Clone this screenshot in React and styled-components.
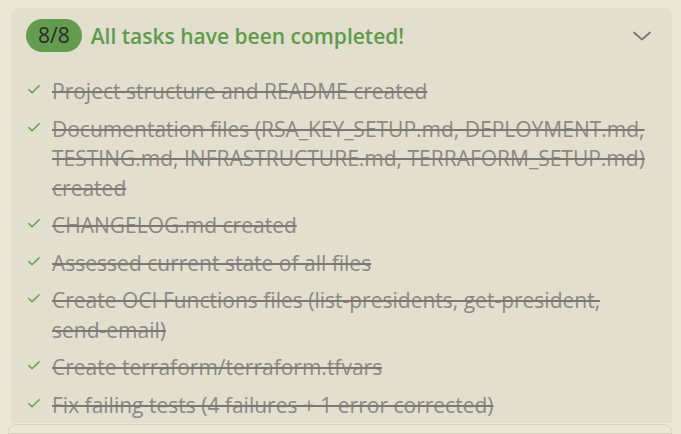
import React from "react";
import styled, { createGlobalStyle } from "styled-components";

const Global = createGlobalStyle`
  html, body { margin: 0; padding: 0; background: #ece7d6; }
  body { font-family: "Open Sans", "Noto Sans", sans-serif; overflow: hidden; }
  * { box-sizing: border-box; }
`;

const Page = styled.div`
  width: 681px;
  height: 434px;
  overflow: hidden;
  padding: 8px 9px 0 8px;
  display: flex;
  flex-direction: column;
  gap: 1px;
`;

const Card = styled.section`
  flex: none;
  margin-left: 3px;
  background: #e2dfcf;
  border-radius: 8px 8px 0 0;
  padding: 11px 20px 3px 15px;
  display: flex;
  flex-direction: column;
`;

const Header = styled.div`
  display: flex;
  align-items: center;
  height: 33px;
  gap: 9px;
`;

const Badge = styled.span`
  display: inline-flex;
  align-items: center;
  justify-content: center;
  height: 33px;
  padding: 0 12px;
  border-radius: 17px;
  background: #649c4f;
  color: #2b2b28;
  font-size: 21px;
  line-height: 1;
`;

const Title = styled.h2`
  margin: 0;
  flex: 1;
  font-size: 21px;
  font-weight: 600;
  color: #5f9b4b;
`;

const Chevron = styled.svg`
  width: 20px;
  height: 20px;
  color: #7a7873;
`;

const List = styled.ul`
  list-style: none;
  margin: 25px 0 0 0;
  padding: 0 0 0 2px;
  display: flex;
  flex-direction: column;
  gap: 8px;
`;

const Item = styled.li`
  display: flex;
  align-items: flex-start;
  gap: 12px;
`;

const Check = styled.svg`
  flex: none;
  width: 12px;
  height: 9px;
  margin-top: 8px;
  color: #5ba04a;
`;

const Text = styled.span`
  font-size: 21px;
  line-height: 29.5px;
  color: #8a8983;
  text-decoration: line-through;
  text-decoration-color: #7a7974;
  text-decoration-thickness: 2px;
`;

const Footer = styled.div`
  flex: 1;
  background: #ebe7d6;
  border: 1px solid #d6d2c2;
  border-radius: 8px 8px 0 0;
`;

const tasks = [
  "Project structure and README created",
  "Documentation files (RSA_KEY_SETUP.md, DEPLOYMENT.md, TESTING.md, INFRASTRUCTURE.md, TERRAFORM_SETUP.md) created",
  "CHANGELOG.md created",
  "Assessed current state of all files",
  "Create OCI Functions files (list-presidents, get-president, send-email)",
  "Create terraform/terraform.tfvars",
  "Fix failing tests (4 failures + 1 error corrected)",
];

export default function App() {
  return (
    <>
      <Global />
      <Page>
        <Card>
          <Header>
            <Badge>8/8</Badge>
            <Title>All tasks have been completed!</Title>
            <Chevron viewBox="0 0 20 20" fill="none" stroke="currentColor" strokeWidth="1.8" strokeLinecap="round" strokeLinejoin="round">
              <path d="M2 6.5 L10 13.5 L18 6.5" />
            </Chevron>
          </Header>
          <List>
            {tasks.map((t) => (
              <Item key={t}>
                <Check viewBox="0 0 12 9" fill="none" stroke="currentColor" strokeWidth="1.4" strokeLinecap="round" strokeLinejoin="round">
                  <path d="M0.8 4.5 L4 7.8 L11.2 0.8" />
                </Check>
                <Text>{t}</Text>
              </Item>
            ))}
          </List>
        </Card>
        <Footer />
      </Page>
    </>
  );
}
